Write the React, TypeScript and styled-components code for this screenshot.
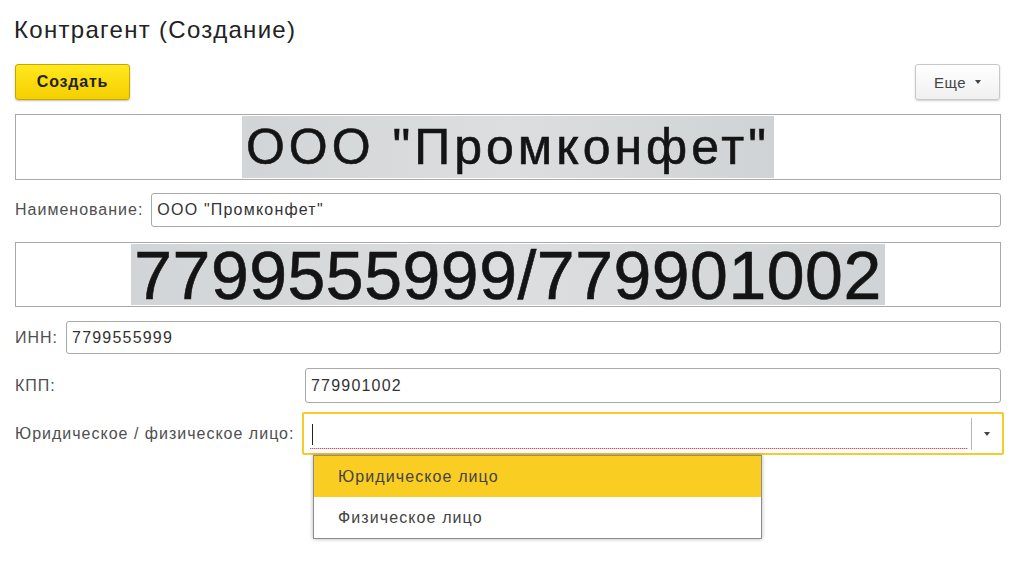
import styled, { createGlobalStyle } from "styled-components";

const GlobalStyle = createGlobalStyle`
    html, body {
        margin: 0;
        padding: 0;
        background: #fff;
    }
    body {
        font-family: "Liberation Sans", Arial, sans-serif;
        color: #333;
    }
`;

const Page = styled.div`
    width: 1024px;
    height: 568px;
    box-sizing: border-box;
    padding: 14px 23px 0 15px;
    overflow: hidden;
`;

const Title = styled.h1`
    margin: 0 0 0 -1px;
    height: 36px;
    line-height: 32px;
    font-size: 24px;
    font-weight: normal;
    letter-spacing: 1.3px;
    color: #222;
`;

const Toolbar = styled.div`
    display: flex;
    justify-content: space-between;
    align-items: center;
    height: 36px;
    margin: 14px 0 14px;
`;

const PrimaryButton = styled.button`
    width: 115px;
    height: 36px;
    border: 1px solid #c4a800;
    border-radius: 3px;
    background: linear-gradient(#ffe81e, #f5cf00);
    box-shadow: 0 1px 2px rgba(0, 0, 0, 0.25);
    font-family: inherit;
    font-size: 16px;
    font-weight: bold;
    letter-spacing: 0.8px;
    color: #222;
`;

const MoreButton = styled.button`
    display: flex;
    align-items: center;
    gap: 9px;
    width: 85px;
    height: 36px;
    padding: 0 0 0 18px;
    margin-right: 1px;
    border: 1px solid #c8c8c8;
    border-radius: 3px;
    background: linear-gradient(#ffffff, #f0f0f0);
    box-shadow: 0 1px 2px rgba(0, 0, 0, 0.2);
    font-family: inherit;
    font-size: 15px;
    letter-spacing: 0.5px;
    color: #444;
`;

const Caret = styled.span`
    width: 0;
    height: 0;
    border-left: 3.5px solid transparent;
    border-right: 3.5px solid transparent;
    border-top: 4px solid #444;
`;

const Form = styled.div`
    display: flex;
    flex-direction: column;
`;

const ImageBox = styled.div<{ $height: number; $gap: number }>`
    display: flex;
    justify-content: center;
    align-items: center;
    height: ${({ $height }) => $height}px;
    margin-bottom: ${({ $gap }) => $gap}px;
    box-sizing: border-box;
    border: 1px solid #a9a9a9;
    background: #fff;
`;

const Scan = styled.div<{ $size: number; $width: number; $spacing: number }>`
    display: flex;
    justify-content: center;
    align-items: center;
    width: ${({ $width }) => $width}px;
    height: calc(100% - 2px);
    background: linear-gradient(90deg, #d2d5d7, #dcdedf 50%, #d0d3d5);
    font-family: "Liberation Sans", Arial, sans-serif;
    font-size: ${({ $size }) => $size}px;
    letter-spacing: ${({ $spacing }) => $spacing}px;
    color: #141414;
    white-space: nowrap;
    filter: blur(0.6px);
    -webkit-text-stroke: 0.6px #141414;
`;

const Row = styled.div<{ $gap: number }>`
    position: relative;
    display: flex;
    align-items: center;
    margin-bottom: ${({ $gap }) => $gap}px;
`;

const Label = styled.label<{ $width?: number }>`
    flex: none;
    width: ${({ $width }) => ($width ? `${$width}px` : "auto")};
    margin-right: 8px;
    font-size: 16px;
    letter-spacing: 1px;
    color: #4f4f4f;
    white-space: nowrap;
`;

const Input = styled.div<{ $height: number }>`
    flex: 1;
    display: flex;
    align-items: center;
    height: ${({ $height }) => $height}px;
    box-sizing: border-box;
    padding: 0 5px;
    border: 1px solid #a9a9a9;
    border-radius: 3px;
    font-size: 16px;
    letter-spacing: 1.2px;
    color: #333;
`;

const SelectField = styled.div`
    flex: 1;
    display: flex;
    align-items: center;
    height: 43px;
    box-sizing: border-box;
    margin-left: -3px;
    margin-right: -3px;
    padding: 0 0 0 6px;
    border: 2px solid #f6cb2a;
    border-radius: 2px;
`;

const SelectText = styled.div`
    position: relative;
    flex: 1;
    display: flex;
    align-items: center;
    height: 26px;
    margin-top: 4px;

    &::after {
        content: "";
        position: absolute;
        left: 0;
        right: 0;
        bottom: 0;
        height: 1px;
        background: repeating-linear-gradient(90deg, #ec4a5a 0 1px, #f8c0c6 1px 2px);
    }
`;

const Cursor = styled.span`
    width: 1px;
    height: 21px;
    margin-left: 2px;
    margin-top: -2px;
    background: #222;
`;

const SelectButton = styled.div`
    display: flex;
    justify-content: center;
    align-items: center;
    width: 30px;
    height: 32px;
    margin-left: 3px;
    border-left: 1px solid #b5b5b5;
`;

const Popup = styled.ul`
    position: absolute;
    left: 298px;
    top: 43px;
    width: 449px;
    margin: 0;
    padding: 0;
    list-style: none;
    box-sizing: border-box;
    border: 1px solid #8c8c8c;
    background: #fff;
    box-shadow: 0 0 4px rgba(0, 0, 0, 0.3);
`;

const PopupItem = styled.li<{ $active?: boolean }>`
    height: 41px;
    line-height: 41px;
    padding-left: 24px;
    font-size: 16px;
    letter-spacing: 1.1px;
    color: #444;
    background: ${({ $active }) => ($active ? "#f9cd22" : "#fff")};
`;

export default function App() {
    return (
        <>
            <GlobalStyle />
            <Page>
                <Title>Контрагент (Создание)</Title>
                <Toolbar>
                    <PrimaryButton>Создать</PrimaryButton>
                    <MoreButton>
                        Еще
                        <Caret />
                    </MoreButton>
                </Toolbar>
                <Form>
                    <ImageBox $height={66} $gap={13}>
                        <Scan $size={50} $width={532} $spacing={4}>ООО "Промконфет"</Scan>
                    </ImageBox>
                    <Row $gap={15}>
                        <Label>Наименование:</Label>
                        <Input $height={34}>ООО "Промконфет"</Input>
                    </Row>
                    <ImageBox $height={65} $gap={14}>
                        <Scan $size={68} $width={754} $spacing={0.5}>7799555999/779901002</Scan>
                    </ImageBox>
                    <Row $gap={14}>
                        <Label>ИНН:</Label>
                        <Input $height={33}>7799555999</Input>
                    </Row>
                    <Row $gap={9}>
                        <Label $width={282}>КПП:</Label>
                        <Input $height={35}>779901002</Input>
                    </Row>
                    <Row $gap={0}>
                        <Label $width={282}>Юридическое / физическое лицо:</Label>
                        <SelectField>
                            <SelectText>
                                <Cursor />
                            </SelectText>
                            <SelectButton>
                                <Caret />
                            </SelectButton>
                        </SelectField>
                        <Popup>
                            <PopupItem $active>Юридическое лицо</PopupItem>
                            <PopupItem>Физическое лицо</PopupItem>
                        </Popup>
                    </Row>
                </Form>
            </Page>
        </>
    );
}
